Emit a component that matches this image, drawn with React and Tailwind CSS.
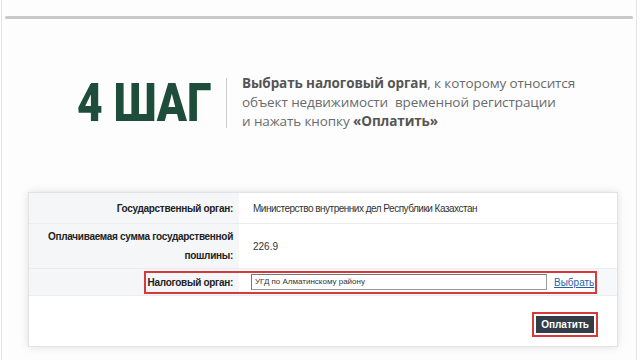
export default function App() {
  return (
    <div className="w-[640px] h-[360px] bg-[#fdfdfd] overflow-hidden" style={{ fontFamily: '"Open Sans", sans-serif' }}>
      <div className="ml-[1px] mr-[3px] h-full border-l border-r border-[#e6e6e6] flex flex-col">
        <div className="mt-[16px] ml-[3px] mr-[3px] h-[3px] bg-[#c9c9c9] rounded-full shrink-0"></div>

        <div className="flex items-center mt-[55px] ml-[75px] shrink-0">
          <div className="w-[134px] shrink-0 h-[50px] flex items-center overflow-visible">
            <div className="text-[54px] leading-none font-black text-[#1e4e3b] whitespace-nowrap origin-left scale-x-[0.82]" style={{ fontFamily: 'Roboto, sans-serif' }}>
              4 ШАГ
            </div>
          </div>
          <div className="w-px h-[50px] bg-[#cfcfcf] ml-[15px] mr-[15px] shrink-0"></div>
          <div className="text-[13.5px] leading-[19px] text-[#6b6b6b] whitespace-nowrap tracking-[-0.1px]">
            <div><span className="font-bold text-[#555]">Выбрать налоговый орган</span>, к которому относится</div>
            <div>объект недвижимости&nbsp; временной регистрации</div>
            <div>и нажать кнопку <span className="font-bold text-[#555]">«Оплатить»</span></div>
          </div>
        </div>

        <div className="mt-[61px] ml-[26px] w-[590px] h-[155px] shrink-0 bg-white border border-[#e3e3e3] shadow-[0_0_8px_rgba(0,0,0,0.12)] flex flex-col" style={{ fontFamily: '"Liberation Sans", Arial, sans-serif' }}>
          <div className="flex h-[31px] border-b border-[#ececec]">
            <div className="w-[210px] shrink-0 bg-[#f4f6f7] flex items-center justify-end pr-[6px] text-[10px] font-bold text-[#222] whitespace-nowrap tracking-[-0.3px]">Государственный орган:</div>
            <div className="flex items-center pl-[14px] text-[10px] text-[#333] whitespace-nowrap tracking-[-0.5px]">Министерство внутренних дел Республики Казахстан</div>
          </div>
          <div className="flex h-[45px] border-b border-[#ececec]">
            <div className="w-[210px] shrink-0 bg-[#f4f6f7] flex flex-col justify-center items-end pr-[6px] text-[10px] font-bold text-[#222] leading-[19px] text-right whitespace-nowrap tracking-[-0.3px]">
              <div>Оплачиваемая сумма государственной</div>
              <div>пошлины:</div>
            </div>
            <div className="flex items-center pl-[14px] text-[10px] text-[#333]">226.9</div>
          </div>
          <div className="flex h-[27px] border-b border-[#ececec] bg-[#f7f8f9]">
            <div className="w-[210px] shrink-0 bg-[#f4f6f7] flex items-center justify-end">
              <div className="w-[95px] h-[23px] border-2 border-r-0 border-[#d63a3a] flex items-center justify-end pr-[6px] text-[10px] font-bold text-[#222] whitespace-nowrap tracking-[-0.3px]">Налоговый орган:</div>
            </div>
            <div className="flex items-center">
              <div className="h-[23px] w-[358px] border-2 border-l-0 border-[#d63a3a] flex items-center pl-[12px] bg-white">
                <div className="w-[296px] shrink-0 h-[16px] border border-[#9a9a9a] border-t-[#777] border-l-[#777] flex items-center pl-[3px] text-[8px] text-[#333] bg-white whitespace-nowrap">УГД по Алматинскому району</div>
                <a className="ml-[7px] text-[10px] text-[#2a5fa8] underline whitespace-nowrap">Выбрать</a>
              </div>
            </div>
          </div>
          <div className="flex-1 flex justify-end items-start pt-[16px] pr-[19px]">
            <div className="border-2 border-[#d63a3a] p-[2px]">
              <div className="bg-[#323d48] text-white text-[10px] font-bold px-[5px] h-[17px] flex items-center whitespace-nowrap">Оплатить</div>
            </div>
          </div>
        </div>
      </div>
    </div>
  );
}
